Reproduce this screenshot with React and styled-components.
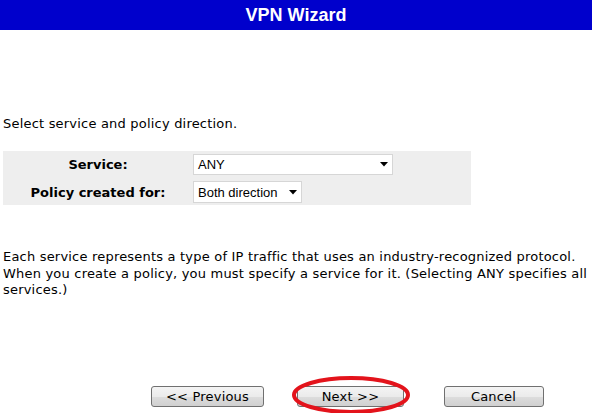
import React from "react";
import styled, { createGlobalStyle } from "styled-components";

const GlobalStyle = createGlobalStyle`
  html, body { margin: 0; padding: 0; background: #ffffff; }
  body { font-family: "DejaVu Sans", Verdana, sans-serif; font-size: 13px; color: #000; }
`;

const Page = styled.div`
  width: 592px;
  height: 413px;
  overflow: hidden;
  display: flex;
  flex-direction: column;
`;

const Header = styled.div`
  height: 30px;
  background: #0000cc;
  color: #ffffff;
  font-family: "Liberation Sans", Arial, sans-serif;
  font-weight: bold;
  font-size: 18px;
  line-height: 30px;
  text-align: center;
`;

const Content = styled.div`
  padding: 0 3px;
  font-family: "DejaVu Sans", Verdana, sans-serif;
  font-size: 13px;
  letter-spacing: 0.2px;
`;

const Intro = styled.p`
  margin: 86px 0 0;
  line-height: 16px;
`;

const FormTable = styled.div`
  margin-top: 19px;
  width: 468px;
  background: #eeeeee;
  padding: 3px 0 2px;
  display: grid;
  grid-template-columns: 190px auto;
  row-gap: 6px;
  align-items: center;
`;

const Label = styled.div`
  font-weight: bold;
  text-align: center;
  letter-spacing: 0;
`;

const SelectBox = styled.div`
  box-sizing: border-box;
  width: ${(p) => p.$w}px;
  height: ${(p) => p.$h}px;
  background: #ffffff;
  border: 1px solid #d6d6d6;
  display: flex;
  align-items: center;
  justify-content: space-between;
  padding: 0 4px 0 4px;
  font-family: "Liberation Sans", Arial, sans-serif;
  font-size: 13px;
  letter-spacing: 0;
`;

const Arrow = () => (
  <svg width="8" height="5" viewBox="0 0 8 5">
    <polygon points="0,0 8,0 4,4.5" fill="#000" />
  </svg>
);

const Description = styled.p`
  margin: 44px 0 0;
  line-height: 16.5px;
`;

const ButtonBar = styled.div`
  margin-top: auto;
  margin-left: 136px;
  margin-bottom: 6px;
  display: grid;
  grid-template-columns: repeat(3, 143px);
  justify-items: center;
`;

const Cell = styled.div`
  position: relative;
`;

const Button = styled.button`
  box-sizing: border-box;
  width: ${(p) => p.$w}px;
  height: 21px;
  padding: 0;
  border: 1px solid #707070;
  border-radius: 3px;
  background: linear-gradient(#f4f4f4 0%, #ebebeb 50%, #dddddd 51%, #d0d0d0 100%);
  font-family: "DejaVu Sans", Verdana, sans-serif;
  font-size: 13px;
  letter-spacing: 0.2px;
  color: #000;
  line-height: 19px;
`;

const Ellipse = styled.svg`
  position: absolute;
  left: -8px;
  top: -12px;
  pointer-events: none;
`;

export default function App() {
  return (
    <>
      <GlobalStyle />
      <Page>
        <Header>VPN Wizard</Header>
        <Content>
          <Intro>Select service and policy direction.</Intro>
          <FormTable>
            <Label>Service:</Label>
            <SelectBox $w={200} $h={21}>
              <span>ANY</span>
              <Arrow />
            </SelectBox>
            <Label>Policy created for:</Label>
            <SelectBox $w={109} $h={22}>
              <span>Both direction</span>
              <Arrow />
            </SelectBox>
          </FormTable>
          <Description>
            Each service represents a type of IP traffic that uses an industry-recognized protocol.
            When you create a policy, you must specify a service for it. (Selecting ANY specifies all
            services.)
          </Description>
        </Content>
        <ButtonBar>
          <Cell>
            <Button $w={113}>&lt;&lt; Previous</Button>
          </Cell>
          <Cell>
            <Button $w={107}>Next &gt;&gt;</Button>
            <Ellipse width="124" height="44" viewBox="0 0 124 44">
              <ellipse cx="62" cy="21" rx="57" ry="17" fill="none" stroke="#e3131b" strokeWidth="4" />
            </Ellipse>
          </Cell>
          <Cell>
            <Button $w={100}>Cancel</Button>
          </Cell>
        </ButtonBar>
      </Page>
    </>
  );
}
